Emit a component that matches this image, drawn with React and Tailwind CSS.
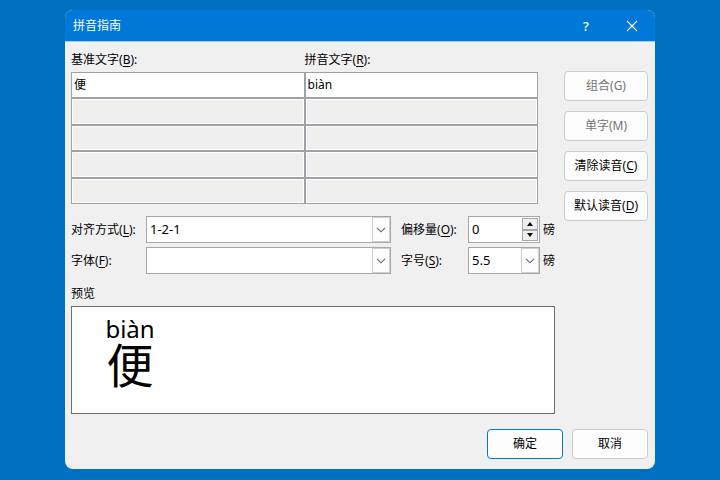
import React from 'react';

const fontStack = "font-['Noto_Sans','Noto_Sans_CJK_SC',sans-serif]";

const rows = [
  { base: '便', pinyin: 'biàn' },
  { base: '', pinyin: '' },
  { base: '', pinyin: '' },
  { base: '', pinyin: '' },
  { base: '', pinyin: '' },
];

const Key = ({ text, hotkey }) => (
  <>
    {text}(<u className="underline-offset-2">{hotkey}</u>)
  </>
);

const Cell = ({ value, id, label }) => (
  <input
    id={id}
    aria-label={label}
    defaultValue={value}
    disabled={!value}
    className="h-full min-w-0 w-full border border-[#a0a0a8] bg-white px-[2px] pb-[2px] text-black outline-none disabled:bg-[#efefef] disabled:shadow-[inset_0_0_0_1px_#ffffff]"
  />
);

const SelectBox = ({ id, value, options }) => (
  <div className="relative h-[27px] border border-[#a3a7ae] bg-white">
    <select
      id={id}
      defaultValue={value}
      className="block h-full w-full appearance-none bg-transparent pl-[3px] pb-[2px] text-[13px] text-black outline-none"
    >
      {options.map((option) => (
        <option key={option}>{option}</option>
      ))}
    </select>
    <span className="pointer-events-none absolute inset-y-0 right-0 flex w-[18px] items-center justify-center border border-[#d0d0d0] bg-[#fdfdfd]">
      <svg width="10" height="6" viewBox="0 0 10 6" fill="none" stroke="#666" strokeWidth="1.1">
        <path d="M1 0.8 5 4.8 9 0.8" />
      </svg>
    </span>
  </div>
);

const SpinButton = ({ label, path }) => (
  <button
    type="button"
    aria-label={label}
    className="flex flex-1 items-center justify-center border border-[#a8a8a8] bg-[#efefef]"
  >
    <svg width="6" height="4" viewBox="0 0 6 4" fill="#000">
      <path d={path} />
    </svg>
  </button>
);

const Button = ({ children, disabled, primary }) => (
  <button
    type="button"
    disabled={disabled}
    className={`h-[30px] rounded-[4px] border bg-[#fdfdfd] text-black disabled:text-[#747474] ${
      primary ? 'border-[#0078d7]' : 'border-[#cccccc]'
    }`}
  >
    {children}
  </button>
);

const TitleBar = () => (
  <header className="flex h-8 items-center border-b border-[#a9cdf0] bg-[#0078d7] pl-2 text-white">
    <h1 className="flex-1">拼音指南</h1>
    <button type="button" aria-label="帮助" className="h-full w-[46px] text-[13px] font-medium">
      ?
    </button>
    <button type="button" aria-label="关闭" className="flex h-full w-[46px] items-center justify-center">
      <svg width="12" height="12" viewBox="0 0 12 12" stroke="#fff" strokeWidth="1.1">
        <path d="M1 1 11 11M11 1 1 11" />
      </svg>
    </button>
  </header>
);

const PinyinGrid = () => (
  <div className="mr-[17px]">
    <div className="grid grid-cols-2">
      <label htmlFor="base-0">
        <Key text="基准文字" hotkey="B" />:
      </label>
      <label htmlFor="pinyin-0">
        <Key text="拼音文字" hotkey="R" />:
      </label>
    </div>
    <div className="mt-[3px] grid h-[132px] grid-cols-2 grid-rows-5">
      {rows.map((row, i) => (
        <React.Fragment key={i}>
          <Cell id={`base-${i}`} label={`基准文字 ${i + 1}`} value={row.base} />
          <Cell id={`pinyin-${i}`} label={`拼音文字 ${i + 1}`} value={row.pinyin} />
        </React.Fragment>
      ))}
    </div>
  </div>
);

const Settings = () => (
  <div className="mt-3 grid grid-cols-[75px_1fr_67px_72px_15px] items-center gap-y-1">
    <label htmlFor="align">
      <Key text="对齐方式" hotkey="L" />:
    </label>
    <div className="mr-[10px]">
      <SelectBox id="align" value="1-2-1" options={['1-2-1', '0-1-0', '居中', '左对齐', '右对齐']} />
    </div>
    <label htmlFor="offset">
      <Key text="偏移量" hotkey="O" />:
    </label>
    <div className="flex h-[27px] border border-[#a3a7ae] bg-white p-px">
      <input
        id="offset"
        defaultValue="0"
        className="min-w-0 flex-1 pl-[2px] pb-[2px] text-[13px] text-black outline-none"
      />
      <div className="flex w-4 flex-col">
        <SpinButton label="增加" path="M3 0 6 4H0z" />
        <SpinButton label="减少" path="M0 0H6L3 4z" />
      </div>
    </div>
    <span className="pl-[3px]">磅</span>

    <label htmlFor="font">
      <Key text="字体" hotkey="F" />:
    </label>
    <div className="mr-[10px]">
      <SelectBox id="font" value="" options={['', '微软雅黑', '宋体']} />
    </div>
    <label htmlFor="size">
      <Key text="字号" hotkey="S" />:
    </label>
    <SelectBox id="size" value="5.5" options={['5', '5.5', '6.5', '7.5']} />
    <span className="pl-[3px]">磅</span>
  </div>
);

const Preview = () => (
  <section>
    <h2 className="mt-[11px]">预览</h2>
    <div className="mt-[3px] h-[108px] border border-[#6e6e6e] bg-white pl-[33px] pt-2 text-black">
      <div className="flex w-[50px] flex-col items-center font-['Liberation_Sans','Noto_Sans_CJK_SC',sans-serif]">
        <span className="font-['Noto_Sans',sans-serif] text-[24px] leading-7">biàn</span>
        <span className="text-[47px] leading-[48px]">便</span>
      </div>
    </div>
  </section>
);

export default function App() {
  return (
    <main className={`flex min-h-screen justify-center bg-[#0070c0] px-4 pt-[10px] pb-[11px] text-[12px] leading-[18px] text-black ${fontStack}`}>
      <div className="w-full max-w-[590px] self-start overflow-hidden rounded-[8px] bg-[#f0f0f0]">
        <TitleBar />
        <form className="px-[7px] pb-[10px] pt-[9px] pl-[6px]">
          <div className="flex gap-[9px]">
            <div className="min-w-0 flex-1">
              <PinyinGrid />
              <Settings />
              <Preview />
            </div>
            <div className="mt-5 flex w-[84px] flex-col gap-[10px]">
              <Button disabled>组合(G)</Button>
              <Button disabled>单字(M)</Button>
              <Button>
                <Key text="清除读音" hotkey="C" />
              </Button>
              <Button>
                <Key text="默认读音" hotkey="D" />
              </Button>
            </div>
          </div>
          <div className="mt-[15px] grid grid-cols-[76px_76px] justify-end gap-[9px]">
            <Button primary>确定</Button>
            <Button>取消</Button>
          </div>
        </form>
      </div>
    </main>
  );
}
